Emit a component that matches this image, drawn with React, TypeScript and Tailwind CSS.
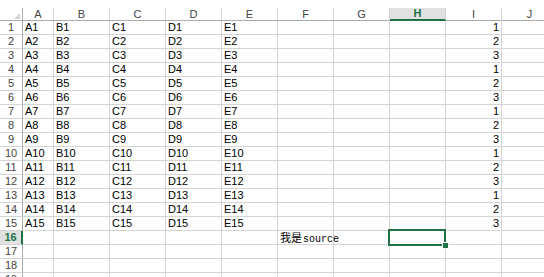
const cols = ["A", "B", "C", "D", "E", "F", "G", "H", "I", "J"];
const widths = ["w-[31px]", "w-[56px]", "w-[56px]", "w-[56px]", "w-[56px]", "w-[56px]", "w-[56px]", "w-[56px]", "w-[56px]", "w-[56px]"];

function cellValue(row: number, col: number) {
  if (row <= 15 && col <= 4) return cols[col] + row;
  if (row <= 15 && col === 8) return String(((row - 1) % 3) + 1);
  return "";
}

function HeaderRow() {
  return (
    <div className="flex h-[13px]">
      <div className="relative w-[23px] shrink-0 border-r border-b border-[#ababab]">
        <svg className="absolute left-[14px] top-[5px]" width="6" height="6" viewBox="0 0 6 6">
          <polygon points="6,0 6,6 0,6" fill="#d4d4d4" />
        </svg>
      </div>
      {cols.map((c, i) =>
        c === "H" ? (
          <div
            key={c}
            className={`${widths[i]} shrink-0 border-r border-b-2 border-r-[#d4d4d4] border-b-[#217346] bg-[#e1e1e1] text-center text-[11px] font-bold leading-[11px] text-[#217346]`}
          >
            {c}
          </div>
        ) : (
          <div
            key={c}
            className={`${widths[i]} shrink-0 border-r border-b border-r-[#d4d4d4] border-b-[#ababab] text-center text-[11px] leading-[12px] text-[#444]`}
          >
            {c}
          </div>
        )
      )}
    </div>
  );
}

function Row({ n }: { n: number }) {
  const selected = n === 16;
  return (
    <div className="flex h-[14px]">
      {selected ? (
        <div className="w-[23px] shrink-0 border-r-2 border-b border-r-[#217346] border-b-[#d4d4d4] bg-[#e1e1e1] text-center text-[11px] font-bold leading-[13px] text-[#217346]">
          {n}
        </div>
      ) : (
        <div className="w-[23px] shrink-0 border-r border-b border-r-[#ababab] border-b-[#d4d4d4] text-center text-[11px] leading-[13px] text-[#444]">
          {n}
        </div>
      )}
      {cols.map((c, i) => {
        const v = cellValue(n, i);
        const isNum = c === "I";
        return (
          <div
            key={c}
            className={`${widths[i]} relative shrink-0 border-r border-b border-[#d4d4d4] text-[11px] leading-[13px] text-black whitespace-nowrap ${
              isNum ? "pr-[2px] text-right" : "pl-[2px]"
            }`}
          >
            {selected && c === "F" ? (
              <span className="absolute left-[2px] top-0 z-10">
                <span className="font-['Noto_Sans_CJK_SC',sans-serif] text-[11px]">我是</span>
                <span className="ml-[1px] font-['Liberation_Mono',monospace] text-[10px]">source</span>
              </span>
            ) : (
              v
            )}
            {selected && c === "H" && (
              <>
                <div className="absolute -left-[2px] -top-[2px] z-20 h-[17px] w-[58px] border-2 border-[#217346]" />
                <div className="absolute left-[53px] top-[12px] z-30 h-[5px] w-[5px] bg-[#217346] outline outline-1 outline-white" />
              </>
            )}
          </div>
        );
      })}
    </div>
  );
}

export default function App() {
  const rows = Array.from({ length: 19 }, (_, i) => i + 1);
  return (
    <div className="h-[277px] w-[544px] overflow-hidden bg-white font-['Liberation_Sans',Arial,sans-serif]">
      <div className="h-[8px]" />
      <HeaderRow />
      {rows.map((n) => (
        <Row key={n} n={n} />
      ))}
    </div>
  );
}
